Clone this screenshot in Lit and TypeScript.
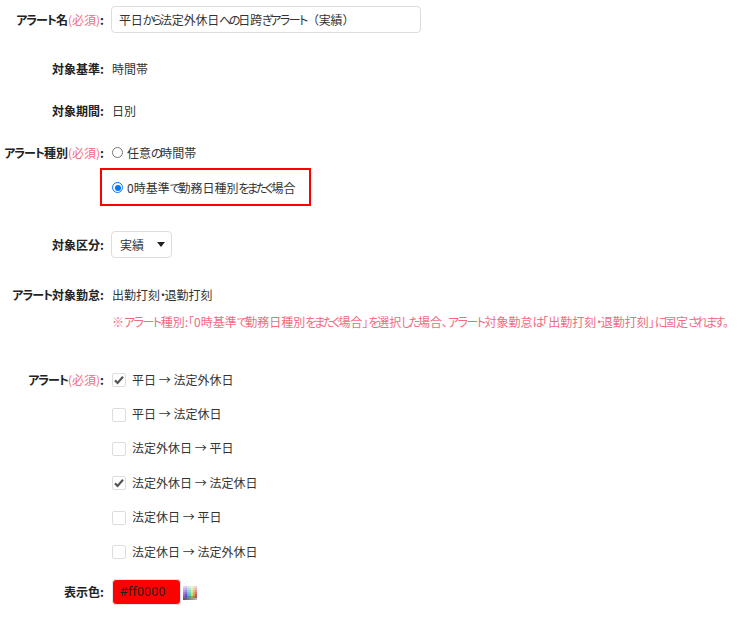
import { LitElement, html, css, svg } from "lit";
import { customElement } from "lit/decorators.js";

const CHECKS: [string, boolean][] = [
  ["平日 → 法定外休日", true],
  ["平日 → 法定休日", false],
  ["法定外休日 → 平日", false],
  ["法定外休日 → 法定休日", true],
  ["法定休日 → 平日", false],
  ["法定休日 → 法定外休日", false],
];

const HUES = [280, 240, 200, 140, 60, 30, 0];

/* Kana runs are set tighter than kanji, as in the reference's UI font. */
function t(text: string) {
  const runs = text.match(/[\u30a0-\u30ff]+|[\u3040-\u309f]+|[（）]|[^\u30a0-\u30ff\u3040-\u309f（）]+/g) ?? [];
  return runs.map((r) => {
    if (/^[\u30a0-\u30ff]/.test(r)) return html`<span class="kata">${r}</span>`;
    if (/^[\u3040-\u309f]/.test(r)) return html`<span class="hira">${r}</span>`;
    if (/^[（）]/.test(r)) return html`<span class="paren">${r}</span>`;
    return r;
  });
}

@customElement("app-root")
export class AppRoot extends LitElement {
  static styles = css`
    :host {
      display: block;
      width: 740px;
      height: 619px;
      overflow: hidden;
      background: #fff;
      color: #333;
      font-family: "Noto Sans CJK JP", "Noto Sans", sans-serif;
      font-size: 12px;
      font-feature-settings: "palt";
    }
    .kata { letter-spacing: -1.5px; }
    .hira { letter-spacing: -2.4px; }
    .paren { font-feature-settings: normal; }
    .form { display: flex; flex-direction: column; padding-top: 5px; }
    .row { display: flex; align-items: center; gap: 8px; }
    .label {
      width: 104px;
      flex: none;
      text-align: right;
      font-weight: 700;
      color: #222;
      white-space: nowrap;
    }
    .label .kata { letter-spacing: -1px; }
    .req { color: #f36b7f; font-weight: 400; }
    .input {
      width: 310px;
      height: 27px;
      margin-left: -1px;
      box-sizing: border-box;
      border: 1px solid #ddd;
      border-radius: 4px;
      padding-left: 7px;
      display: flex;
      align-items: center;
      letter-spacing: -0.15px;
      white-space: nowrap;
    }
    .radio {
      width: 11px;
      height: 11px;
      box-sizing: border-box;
      border: 1px solid #767676;
      border-radius: 50%;
      flex: none;
      margin-right: 4px;
      background: #fff;
    }
    .radio.on { border: 1.5px solid #0075ff; padding: 1.5px; background: #0075ff content-box; }
    .opt { display: flex; align-items: center; white-space: nowrap; }
    .redbox {
      box-sizing: border-box;
      width: 211px;
      height: 38px;
      margin-left: -12px;
      border: 2px solid #f00;
      display: flex;
      align-items: center;
      padding-left: 10px;
      white-space: nowrap;
    }
    .select {
      box-sizing: border-box;
      width: 61px;
      height: 27px;
      margin-left: -1px;
      border: 1px solid #ddd;
      border-radius: 4px;
      padding: 0 6px 0 8px;
      display: flex;
      align-items: center;
      justify-content: space-between;
    }
    .caret {
      width: 0;
      height: 0;
      border-left: 4px solid transparent;
      border-right: 4px solid transparent;
      border-top: 5px solid #222;
    }
    .note { color: #f36b7f; white-space: nowrap; }
    .spacer { width: 104px; flex: none; }
    .box {
      width: 14px;
      height: 14px;
      box-sizing: border-box;
      border: 1px solid #ddd;
      border-radius: 2px;
      flex: none;
      margin-right: 6px;
      margin-top: 2px;
      display: flex;
      align-items: center;
      justify-content: center;
    }
    .box svg { display: block; }
    .swatch {
      box-sizing: border-box;
      width: 69px;
      height: 26px;
      background: #f00;
      border: 1px solid #e6e6e6;
      border-radius: 4px;
      padding-left: 7px;
      display: flex;
      align-items: center;
      color: #222;
      font-family: "Noto Sans", sans-serif;
      letter-spacing: 0.3px;
    }
    .picker { margin: 2px 0 0 2px; display: block; }
    .colorval { display: flex; align-items: center; }
  `;

  private label(text: string, req = false) {
    return html`<div class="label">${t(text)}${req ? html`<span class="req">(必須)</span>` : ""}:</div>`;
  }

  private row(height: number, label: unknown, value: unknown) {
    return html`<div class="row" style="height:${height}px">${label}${value}</div>`;
  }

  private picker() {
    const cells = [];
    for (let y = 0; y < 7; y++) {
      for (let x = 0; x < 7; x++) {
        const col =
          y < 5
            ? `hsl(${HUES[x]} 60% ${88 - y * 7}%)`
            : y === 5
              ? `hsl(${HUES[x]} 30% 50%)`
              : `hsl(0 0% ${35 + x * 6}%)`;
        cells.push(svg`<rect x=${x * 2} y=${y * 2} width="2" height="2" fill=${col}></rect>`);
      }
    }
    return html`<svg class="picker" width="14" height="14" viewBox="0 0 14 14">${cells}</svg>`;
  }

  render() {
    const note = "※アラート種別:「0時基準で勤務日種別をまたぐ場合」を選択した場合、アラート対象勤怠は「出勤打刻・退勤打刻」に固定されます。";
    return html`
      <div class="form">
        ${this.row(28, this.label("アラート名", true), html`<div class="input"><span>${t("平日から法定外休日への日跨ぎアラート（実績）")}</span></div>`)}
        <div style="height:21px"></div>
        ${this.row(28, this.label("対象基準"), html`<div>時間帯</div>`)}
        <div style="height:14px"></div>
        ${this.row(28, this.label("対象期間"), html`<div>日別</div>`)}
        <div style="height:14px"></div>
        ${this.row(28, this.label("アラート種別", true), html`<div class="opt"><span class="radio"></span><span>${t("任意の時間帯")}</span></div>`)}
        ${this.row(42, html`<div class="spacer"></div>`, html`<div class="redbox"><span class="radio on"></span><span>${t("0時基準で勤務日種別をまたぐ場合")}</span></div>`)}
        <div style="height:23px"></div>
        ${this.row(27, this.label("対象区分"), html`<div class="select"><span>実績</span><span class="caret"></span></div>`)}
        <div style="height:23px"></div>
        ${this.row(27, this.label("アラート対象勤怠"), html`<div>${t("出勤打刻・退勤打刻")}</div>`)}
        ${this.row(27, html`<div class="spacer"></div>`, html`<div class="note">${t(note)}</div>`)}
        <div style="height:27px"></div>
        ${CHECKS.map(([text, on], i) =>
          html`<div class="row" style="height:34.4px">
            ${i === 0 ? this.label("アラート", true) : html`<div class="spacer"></div>`}
            <div class="opt"><span class="box">${on
                ? html`<svg width="12" height="12" viewBox="0 0 12 12"><path d="M2 6.4 L4.6 9 L10 2.8" fill="none" stroke="#555" stroke-width="2.2"></path></svg>`
                : ""}</span><span>${text}</span></div>
          </div>`
        )}
        <div style="height:10px"></div>
        ${this.row(27, this.label("表示色"), html`<div class="colorval"><div class="swatch">#ff0000</div>${this.picker()}</div>`)}
      </div>
    `;
  }
}
